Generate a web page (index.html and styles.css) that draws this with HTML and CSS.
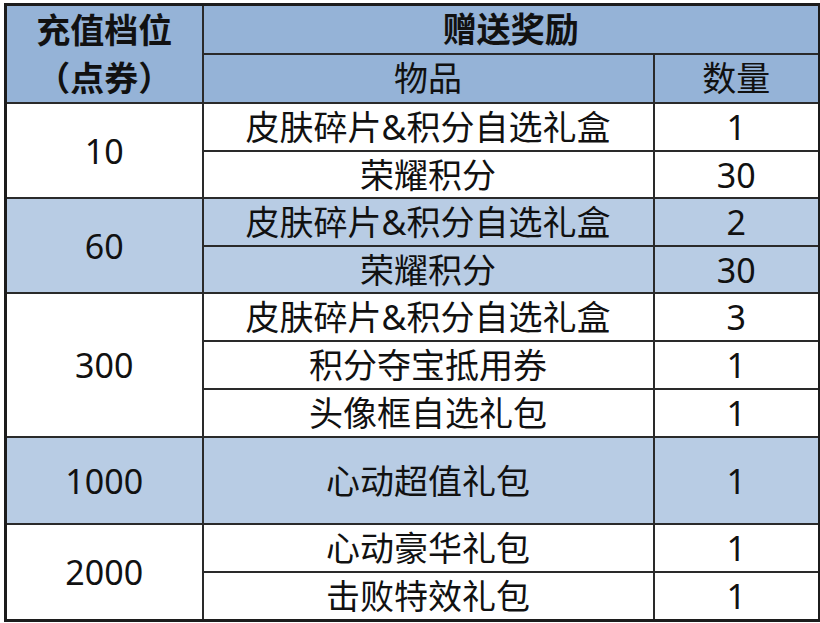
FILE: index.html
```html
<!DOCTYPE html>
<html lang="zh-CN">
<head>
<meta charset="utf-8">
<link rel="stylesheet" href="styles.css">
</head>
<body>
<table class="tbl">
  <colgroup>
    <col class="c1"><col class="c2"><col class="c3">
  </colgroup>
  <tr class="h1 head">
    <th rowspan="2" class="tier">充值档位<br>（点券）</th>
    <th colspan="2">赠送奖励</th>
  </tr>
  <tr class="h2 head">
    <td>物品</td>
    <td>数量</td>
  </tr>
  <tr class="r48">
    <td rowspan="2">10</td>
    <td>皮肤碎片&amp;积分自选礼盒</td>
    <td>1</td>
  </tr>
  <tr class="r47">
    <td>荣耀积分</td>
    <td>30</td>
  </tr>
  <tr class="r48 band">
    <td rowspan="2">60</td>
    <td>皮肤碎片&amp;积分自选礼盒</td>
    <td>2</td>
  </tr>
  <tr class="r47 band">
    <td>荣耀积分</td>
    <td>30</td>
  </tr>
  <tr class="r48">
    <td rowspan="3">300</td>
    <td>皮肤碎片&amp;积分自选礼盒</td>
    <td>3</td>
  </tr>
  <tr class="r48">
    <td>积分夺宝抵用券</td>
    <td>1</td>
  </tr>
  <tr class="r48">
    <td>头像框自选礼包</td>
    <td>1</td>
  </tr>
  <tr class="r87 band">
    <td>1000</td>
    <td>心动超值礼包</td>
    <td>1</td>
  </tr>
  <tr class="r48">
    <td rowspan="2">2000</td>
    <td>心动豪华礼包</td>
    <td>1</td>
  </tr>
  <tr class="r48">
    <td>击败特效礼包</td>
    <td>1</td>
  </tr>
</table>
</body>
</html>
```
FILE: styles.css
```css
html, body {
  margin: 0;
  padding: 0;
  background: #ffffff;
}
body {
  padding: 3px 0 0 4px;
}
.tbl {
  border-collapse: collapse;
  table-layout: fixed;
  width: 814px;
  border: 3px solid #1c1c1c;
  font-family: "Noto Sans", "Noto Sans CJK SC", sans-serif;
  font-size: 34px;
  color: #111;
}
.c1 { width: 197px; }
.c2 { width: 451px; }
.c3 { width: 166px; }
.tbl th, .tbl td {
  border: 2px solid #2a2a2a;
  padding: 0;
  text-align: center;
  vertical-align: middle;
  line-height: 40px;
  font-weight: 400;
}
.head th, .head td {
  background: #95b3d7;
}
.tbl th {
  font-weight: 700;
}
.tbl .tier {
  line-height: 48px;
}
.h1 { height: 49px; }
.h2 { height: 49px; }
.r47 { height: 47px; }
.r48 { height: 48px; }
.r87 { height: 87px; }
.band td {
  background: #b8cce4;
}
```
